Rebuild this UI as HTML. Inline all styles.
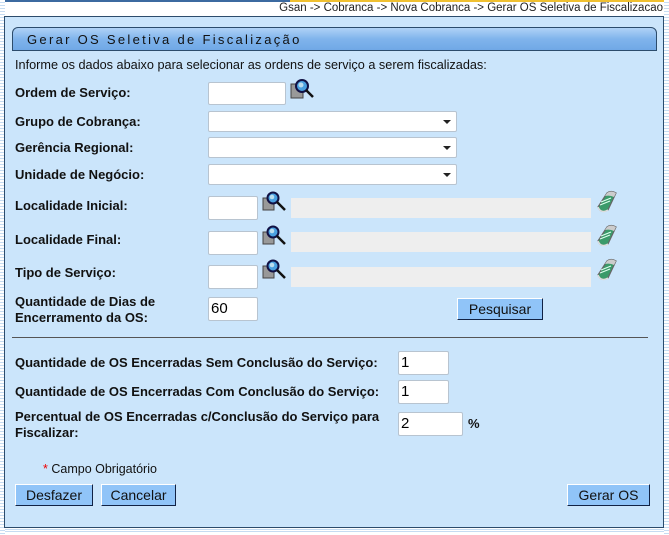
<!DOCTYPE html>
<html><head><meta charset="utf-8"><style>
*{margin:0;padding:0;box-sizing:border-box}
body{width:669px;height:535px;position:relative;overflow:hidden;font-family:"Liberation Sans",Arial,sans-serif;background:#fff}
.stripe{position:absolute;top:0;bottom:0;width:5px;background:repeating-linear-gradient(#fff 0 2px,#c6dcf2 2px 3px)}
.a{position:absolute;white-space:nowrap}
.lbl{font-size:13px;font-weight:bold;color:#111}
.inp{position:absolute;background:#fff;border:1px solid #b8c4d0;border-radius:2px;font-size:15px;padding:2px 2px;line-height:18px}
.sel{position:absolute;background:#fff;border:1px solid #b8c4d0;border-radius:2px;height:21px;width:249px;left:208px}
.sel:after{content:"";position:absolute;right:5px;top:8px;border-left:4px solid transparent;border-right:4px solid transparent;border-top:4px solid #222}
.gray{position:absolute;left:291px;width:300px;height:20px;background:#eeeeee}
.btn{position:absolute;height:22px;background:#90c4f8;border:1px solid #fff;border-right-color:#112244;border-bottom-color:#112244;font-size:14px;text-align:center;line-height:20px;color:#111}
</style></head><body>
<div style="position:absolute;left:0;top:0;width:669px;height:2px;background:#3c6aa0"></div>
<div style="position:absolute;left:290px;top:0;width:379px;height:2px;background:#f0c030"></div>
<div class="stripe" style="left:0"></div><div class="stripe" style="right:0"></div>
<div class="a" style="right:6px;top:2px;font-size:11.5px;color:#222">Gsan -&gt; Cobranca -&gt; Nova Cobranca -&gt; Gerar OS Seletiva de Fiscalizacao</div>
<div style="position:absolute;left:4px;top:16px;width:660px;height:512px;background:#cbe5fb;border:1px solid #2c4c6c"></div>
<div style="position:absolute;left:5px;top:528px;width:659px;height:4px;background:repeating-linear-gradient(#fff 0 1px,#c6dcf2 1px 2px)"></div>
<div style="position:absolute;left:12px;top:27px;width:645px;height:24px;border:1px solid #2c4c6c;border-radius:6px 6px 0 0;background:linear-gradient(#b0d2f6,#80b4ec 50%,#70a8e6)"></div>
<div class="a" style="left:27px;top:32px;font-size:13px;letter-spacing:2.3px;color:#111">Gerar OS Seletiva de Fiscalização</div>
<div class="a" style="left:15px;top:58px;font-size:12.7px;color:#111">Informe os dados abaixo para selecionar as ordens de serviço a serem fiscalizadas:</div>

<div class="a lbl" style="left:15px;top:85px">Ordem de Serviço:</div>
<div class="inp" style="left:208px;top:82px;width:78px;height:23px"></div>
<svg class="a" style="left:290px;top:78px" width="26" height="24" viewBox="0 0 26 24"><rect x="1" y="6" width="12" height="14" fill="#999" stroke="#444"/><circle cx="12" cy="8" r="6" fill="#4aa0e0" stroke="#114" stroke-width="2"/><circle cx="11" cy="7" r="2.5" fill="#bde"/><line x1="16" y1="12" x2="23" y2="19" stroke="#111" stroke-width="2.5"/></svg>

<div class="a lbl" style="left:15px;top:114px">Grupo de Cobrança:</div><div class="sel" style="top:111px"></div>
<div class="a lbl" style="left:15px;top:140px">Gerência Regional:</div><div class="sel" style="top:137px"></div>
<div class="a lbl" style="left:15px;top:167px">Unidade de Negócio:</div><div class="sel" style="top:164px"></div>

<div class="a lbl" style="left:15px;top:198px">Localidade Inicial:</div>
<div class="a lbl" style="left:15px;top:232px">Localidade Final:</div>
<div class="a lbl" style="left:15px;top:265px">Tipo de Serviço:</div>
<div class="inp" style="left:208px;top:196px;width:50px;height:24px"></div>
<div class="inp" style="left:208px;top:231px;width:50px;height:24px"></div>
<div class="inp" style="left:208px;top:265px;width:50px;height:24px"></div>
<div class="gray" style="top:198px"></div><div class="gray" style="top:232px"></div><div class="gray" style="top:267px"></div>
<svg class="a" style="left:261px;top:191px" width="28" height="100" viewBox="0 0 28 100"><g id="m"><rect x="2" y="7" width="11" height="12" fill="#999" stroke="#444"/><circle cx="12" cy="7" r="5.5" fill="#4aa0e0" stroke="#114" stroke-width="2"/><circle cx="11" cy="6" r="2.3" fill="#bde"/><line x1="16" y1="11" x2="24" y2="19" stroke="#111" stroke-width="2.5"/></g><use href="#m" y="34"/><use href="#m" y="68"/></svg>
<svg class="a" style="left:596px;top:190px" width="24" height="100" viewBox="0 0 24 100"><g id="e"><path d="M2 17 L11 3 Q15 0 20 3 L12 20 Q5 24 2 17Z" fill="#3a9a6a" stroke="#666" stroke-width="1.2"/><path d="M11 3 Q15 0 20 3 L18 7 Q14 5 9 6Z" fill="#ccc"/><path d="M5 12 L15 8 M4 15 L14 11" stroke="#dfe" stroke-width="1.2"/><path d="M2 17 Q5 24 12 20" fill="none" stroke="#ddd" stroke-width="1.5"/></g><use href="#e" y="34"/><use href="#e" y="68"/></svg>

<div class="a lbl" style="left:15px;top:294px;line-height:16px">Quantidade de Dias de<br>Encerramento da OS:</div>
<div class="inp" style="left:208px;top:297px;width:50px;height:24px">60</div>
<div class="btn" style="left:457px;top:298px;width:86px">Pesquisar</div>

<div style="position:absolute;left:12px;top:337px;width:636px;height:1px;background:#555"></div>

<div class="a lbl" style="left:15px;top:355px">Quantidade de OS Encerradas Sem Conclusão do Serviço:</div>
<div class="inp" style="left:398px;top:351px;width:51px;height:24px">1</div>
<div class="a lbl" style="left:15px;top:384px">Quantidade de OS Encerradas Com Conclusão do Serviço:</div>
<div class="inp" style="left:398px;top:380px;width:51px;height:24px">1</div>
<div class="a lbl" style="left:15px;top:409px;line-height:16px">Percentual de OS Encerradas c/Conclusão do Serviço para<br>Fiscalizar:</div>
<div class="inp" style="left:398px;top:412px;width:65px;height:24px">2</div>
<div class="a lbl" style="left:468px;top:416px">%</div>

<div class="a" style="left:43px;top:462px;font-size:12.5px;color:#111"><span style="color:#e00">*</span> Campo Obrigatório</div>
<div class="btn" style="left:15px;top:484px;width:78px">Desfazer</div>
<div class="btn" style="left:101px;top:484px;width:75px">Cancelar</div>
<div class="btn" style="left:567px;top:484px;width:83px">Gerar OS</div>
</body></html>
